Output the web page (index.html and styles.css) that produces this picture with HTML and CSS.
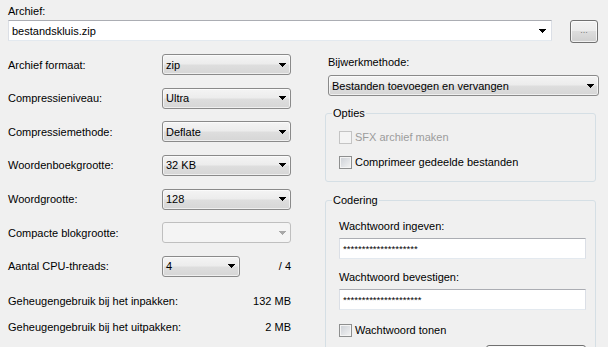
FILE: index.html
```html
<!DOCTYPE html>
<html lang="nl">
<head>
<meta charset="utf-8">
<title>Toevoegen aan archief</title>
<link rel="stylesheet" href="styles.css">
</head>
<body>
<div class="dialog">
  <div class="archive">
    <div class="lbl">Archief:</div>
    <div class="archive-row">
      <div class="combo edit"><span>bestandskluis.zip</span><svg class="arr" width="7" height="4" viewBox="0 0 7 4"><polygon points="0,0 7,0 3.5,4"/></svg></div>
      <button class="btn dots">...</button>
    </div>
  </div>

  <div class="main">
    <div class="left">
      <div class="opts">
        <div class="opt"><span>Archief formaat:</span><div class="combo list"><span>zip</span><svg class="arr" width="7" height="4" viewBox="0 0 7 4"><polygon points="0,0 7,0 3.5,4"/></svg></div></div>
        <div class="opt"><span>Compressieniveau:</span><div class="combo list"><span>Ultra</span><svg class="arr" width="7" height="4" viewBox="0 0 7 4"><polygon points="0,0 7,0 3.5,4"/></svg></div></div>
        <div class="opt"><span>Compressiemethode:</span><div class="combo list"><span>Deflate</span><svg class="arr" width="7" height="4" viewBox="0 0 7 4"><polygon points="0,0 7,0 3.5,4"/></svg></div></div>
        <div class="opt"><span>Woordenboekgrootte:</span><div class="combo list"><span>32 KB</span><svg class="arr" width="7" height="4" viewBox="0 0 7 4"><polygon points="0,0 7,0 3.5,4"/></svg></div></div>
        <div class="opt"><span>Woordgrootte:</span><div class="combo list"><span>128</span><svg class="arr" width="7" height="4" viewBox="0 0 7 4"><polygon points="0,0 7,0 3.5,4"/></svg></div></div>
        <div class="opt"><span>Compacte blokgrootte:</span><div class="combo list disabled"><span></span><svg class="arr" width="7" height="4" viewBox="0 0 7 4"><polygon points="0,0 7,0 3.5,4"/></svg></div></div>
        <div class="opt"><span>Aantal CPU-threads:</span>
          <div class="cpu">
            <div class="combo list short"><span>4</span><svg class="arr" width="7" height="4" viewBox="0 0 7 4"><polygon points="0,0 7,0 3.5,4"/></svg></div>
            <span class="total">/ 4</span>
          </div>
        </div>
      </div>
      <div class="mem">
        <div class="mem-row"><span>Geheugengebruik bij het inpakken:</span><span>132 MB</span></div>
        <div class="mem-row"><span>Geheugengebruik bij het uitpakken:</span><span>2 MB</span></div>
      </div>
    </div>

    <div class="right">
      <div class="update-lbl">Bijwerkmethode:</div>
      <div class="combo list wide"><span>Bestanden toevoegen en vervangen</span><svg class="arr" width="7" height="4" viewBox="0 0 7 4"><polygon points="0,0 7,0 3.5,4"/></svg></div>

      <fieldset class="group options">
        <legend>Opties</legend>
        <div class="inner">
          <label class="check disabled"><span class="box"></span><span>SFX archief maken</span></label>
          <label class="check"><span class="box"></span><span>Comprimeer gedeelde bestanden</span></label>
        </div>
      </fieldset>

      <fieldset class="group coding">
        <legend>Codering</legend>
        <div class="inner">
          <div class="pw-lbl first">Wachtwoord ingeven:</div>
          <div class="textbox"><span class="pw">********************</span></div>
          <div class="pw-lbl">Wachtwoord bevestigen:</div>
          <div class="textbox"><span class="pw">*********************</span></div>
          <label class="check show"><span class="box"></span><span>Wachtwoord tonen</span></label>
          <div class="btn-row"><button class="btn wide-btn"></button></div>
        </div>
      </fieldset>
    </div>
  </div>
</div>
</body>
</html>
```

FILE: styles.css
```css
* { box-sizing: border-box; }
html, body { margin: 0; padding: 0; }
body {
  width: 608px;
  height: 347px;
  overflow: hidden;
  background: #f0f0f0;
  color: #000;
  font: 11px/14px "Liberation Sans", Arial, sans-serif;
}
.dialog { padding: 4px 10px 0 8px; }

.lbl { height: 14px; margin-bottom: 2px; }
.archive-row { display: flex; gap: 18px; align-items: flex-start; height: 23px; }

.combo {
  display: flex;
  align-items: center;
  justify-content: space-between;
  height: 21px;
  padding: 0 4px 0 3px;
  white-space: nowrap;
}
.combo .arr { flex: none; fill: #000; shape-rendering: crispEdges; }
.combo.edit {
  flex: 1;
  height: 21px;
  background: #fff;
  border: 1px solid #dbdfe6;
  border-top-color: #abadb3;
  border-bottom-color: #e3e9ef;
  padding: 0 5px 0 3px;
}
.combo.list {
  border: 1px solid #8a8a8a;
  border-radius: 3px;
  background: linear-gradient(#f4f4f4, #ececec 48%, #dedede 52%, #d6d6d6);
  box-shadow: inset 0 0 0 1px rgba(255,255,255,0.6);
}
.combo.list.disabled {
  border-color: #bfbfbf;
  background: #f4f4f4;
  box-shadow: none;
}
.combo.list.disabled .arr { fill: #a8a8a8; }

.btn {
  display: block;
  width: 28px;
  height: 23px;
  padding: 0 0 3px;
  border: 1px solid #707070;
  border-radius: 3px;
  background: linear-gradient(#f2f2f2, #ebebeb 50%, #dddddd 50%, #cfcfcf);
  box-shadow: inset 0 0 0 1px rgba(255,255,255,0.7);
  font: 9px/1 "Liberation Sans", Arial, sans-serif;
  color: #7a7a7a;
}

.main {
  display: grid;
  grid-template-columns: 283px 274px;
  column-gap: 34px;
  margin-top: 11px;
}

.opts { display: flex; flex-direction: column; gap: 12.67px; }
.opt {
  display: grid;
  grid-template-columns: 154px 129px;
  align-items: center;
  height: 21px;
}
.cpu { display: flex; align-items: center; justify-content: space-between; }
.combo.short { width: 78px; }
.total { padding-right: 0; }

.mem { display: flex; flex-direction: column; gap: 12px; margin-top: 17px; }
.mem-row { display: flex; justify-content: space-between; }

.right { padding-left: 3px; }
.update-lbl { margin-top: 1px; }
.combo.wide { margin-top: 6px; width: 271px; }

.group {
  margin: 10px 3px 0 -3px;
  border: 1px solid #d5dfe5;
  border-radius: 3px;
  padding: 0 9px 11px 7px;
  min-width: 0;
}
.group legend { padding: 0 1px; margin-left: -1px; line-height: 14px; }
.group .inner { margin-left: 6px; }
.coding { margin-top: 11px; padding-bottom: 0; }

.check { display: flex; align-items: center; gap: 3px; height: 16px; }
.options .check:first-child { margin-top: 9px; }
.options .check + .check { margin-top: 9px; }
.box {
  width: 13px;
  height: 13px;
  border: 1px solid #8e8f8f;
  background: linear-gradient(135deg, #cbcfd5, #f4f4f4);
  box-shadow: inset 0 0 0 1px #f4f4f4;
}
.check.disabled { color: #9c9c9c; }
.check.disabled .box {
  border-color: #c4c4c4;
  background: #f4f4f4;
  box-shadow: none;
}

.pw-lbl { margin-top: 11px; }
.pw-lbl.first { margin-top: 12px; }
.textbox {
  height: 21px;
  margin-top: 5px;
  background: #fff;
  border: 1px solid #dbdfe6;
  border-top-color: #abadb3;
  border-bottom-color: #e3e9ef;
  padding: 0 3px;
  display: flex;
  align-items: center;
}
.pw { font: 9.6px/1 "Liberation Sans", Arial, sans-serif; letter-spacing: 0; }
.check.show { margin-top: 12px; }
.btn-row { display: flex; justify-content: flex-end; margin-top: 7px; }
.btn.wide-btn { width: 100px; }
```
